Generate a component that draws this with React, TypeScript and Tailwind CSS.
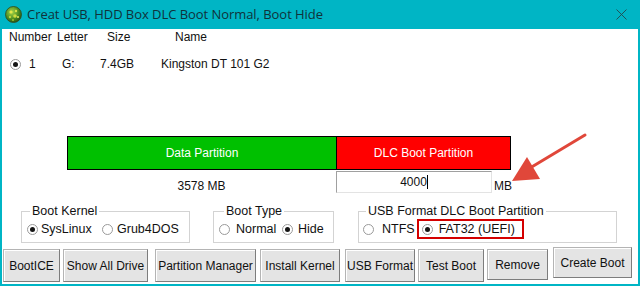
import React from "react";

function Radio({ checked }: { checked?: boolean }) {
  return (
    <span className="inline-flex w-[11px] h-[11px] shrink-0 items-center justify-center rounded-full border border-[#9a9a9a] bg-white">
      {checked && <span className="w-[5px] h-[5px] rounded-full bg-[#151515]" />}
    </span>
  );
}

function Btn({ label, w, cls = "" }: { label: string; w: string; cls?: string }) {
  return (
    <button
      className={`${w} ${cls} flex items-center justify-center bg-[#e4e4e4] border border-[#b4b4b4] border-r-[#7d7d7d] border-b-[#7d7d7d] shadow-[inset_1px_1px_0_#ffffff] text-[12px] text-[#111] leading-none whitespace-nowrap`}
    >
      {label}
    </button>
  );
}

export default function App() {
  return (
    <div className="relative w-[640px] h-[287px] bg-white overflow-hidden font-['Liberation_Sans',Arial,sans-serif] text-[#111]">
      <div className="flex flex-col w-[640px] h-[286px]">
        {/* Title bar */}
        <div className="flex items-center h-[29px] bg-[#00b5c5] pl-[5px] pr-[13px] shrink-0">
          <svg width="17" height="17" viewBox="0 0 17 17" className="shrink-0">
            <defs>
              <radialGradient id="g" cx="0.4" cy="0.35" r="0.7">
                <stop offset="0" stopColor="#a6d64a" />
                <stop offset="0.6" stopColor="#4c8d22" />
                <stop offset="1" stopColor="#244d12" />
              </radialGradient>
            </defs>
            <circle cx="8.5" cy="8.5" r="8" fill="url(#g)" stroke="#2f4a1e" strokeWidth="0.8" />
            <circle cx="6" cy="6" r="1.6" fill="#e3e64a" />
            <circle cx="11" cy="5" r="1.2" fill="#d8e048" />
            <circle cx="10" cy="10" r="1.8" fill="#cddc3e" />
            <circle cx="5" cy="11" r="1.2" fill="#b9d23a" />
            <circle cx="13" cy="11" r="1" fill="#e8ea58" />
            <circle cx="8" cy="14" r="1" fill="#9cc032" />
          </svg>
          <span className="ml-[5px] text-[13px] text-[#10323a] font-['Open_Sans',sans-serif] tracking-[-0.05px] leading-none">
            Creat USB, HDD Box DLC Boot Normal, Boot Hide
          </span>
          <svg width="11" height="11" viewBox="0 0 11 11" className="ml-auto">
            <path d="M0.5 0.5 L10.5 10.5 M10.5 0.5 L0.5 10.5" stroke="#24474c" strokeWidth="0.9" />
          </svg>
        </div>

        {/* Body */}
        <div className="flex flex-col flex-1 border-l-2 border-r-2 border-b-2 border-[#00b5c5] bg-white text-[12px]">
          {/* header */}
          <div className="flex items-center h-[16px] pl-[7px]">
            <span className="w-[48px]">Number</span>
            <span className="w-[50px]">Letter</span>
            <span className="w-[68px]">Size</span>
            <span>Name</span>
          </div>
          {/* device row */}
          <div className="flex items-center h-[16px] mt-[11px] pl-[8px]">
            <span className="w-[19px] flex">
              <Radio checked />
            </span>
            <span className="w-[33px]">1</span>
            <span className="w-[38px]">G:</span>
            <span className="w-[61px]">7.4GB</span>
            <span>Kingston DT 101 G2</span>
          </div>

          {/* partition bar */}
          <div className="flex mt-[64px] ml-[65px] w-[444px] h-[34px] border border-black text-white">
            <div className="w-[268px] bg-[#00c000] flex items-center justify-center">Data Partition</div>
            <div className="flex-1 border-l border-black bg-[#ff0000] flex items-center justify-center">
              DLC Boot Partition
            </div>
          </div>

          {/* sizes row */}
          <div className="flex items-start ml-[65px] mt-[1px] h-[23px]">
            <div className="w-[269px] text-center pt-[7px] leading-[16px]">3578 MB</div>
            <div className="w-[156px] h-[22px] bg-white border border-[#a0a0a0] border-r-[#e3e3e3] border-b-[#e3e3e3] flex items-center justify-center">
              <span className="leading-none">4000</span>
              <span className="w-[1px] h-[14px] bg-black" />
            </div>
            <div className="ml-[2px] pt-[7px] leading-[16px]">MB</div>
          </div>

          {/* group boxes */}
          <div className="flex mt-[10px] text-[12.5px]">
            <fieldset className="ml-[19px] w-[169px] border border-[#d3d3d3] pb-[5px]">
              <legend className="ml-[8px] px-[2px] leading-[14px]">Boot Kernel</legend>
              <div className="flex items-center h-[16px] mt-[3px] pl-[5px]">
                <Radio checked />
                <span className="ml-[3px] w-[61px]">SysLinux</span>
                <Radio />
                <span className="ml-[4px]">Grub4DOS</span>
              </div>
            </fieldset>
            <fieldset className="ml-[23px] w-[121px] border border-[#d3d3d3] pb-[5px]">
              <legend className="ml-[10px] px-[2px] leading-[14px]">Boot Type</legend>
              <div className="flex items-center h-[16px] mt-[3px] pl-[5px]">
                <Radio />
                <span className="ml-[6px] w-[46px]">Normal</span>
                <Radio checked />
                <span className="ml-[5px]">Hide</span>
              </div>
            </fieldset>
            <fieldset className="ml-[24px] w-[259px] border border-[#d3d3d3] pb-[5px]">
              <legend className="ml-[7px] px-[2px] leading-[14px]">USB Format DLC Boot Partition</legend>
              <div className="flex items-center h-[16px] mt-[3px] pl-[4px]">
                <Radio />
                <span className="ml-[8px]">NTFS</span>
                <div className="ml-[2px] flex items-center h-[20px] border-2 border-[#d40000] pl-[3px] pr-[7px]">
                  <Radio checked />
                  <span className="ml-[6px]">FAT32 (UEFI)</span>
                </div>
              </div>
            </fieldset>
          </div>

          {/* buttons */}
          <div className="flex items-start mt-[6px] pl-[1px]">
            <Btn label="BootICE" w="w-[57px] h-[33px]" />
            <Btn label="Show All Drive" w="w-[85px] h-[33px]" cls="ml-[3px]" />
            <Btn label="Partition Manager" w="w-[101px] h-[33px]" cls="ml-[7px]" />
            <Btn label="Install Kernel" w="w-[80px] h-[33px]" cls="ml-[4px]" />
            <Btn label="USB Format" w="w-[70px] h-[33px]" cls="ml-[5px]" />
            <Btn label="Test Boot" w="w-[66px] h-[33px]" cls="ml-[3px]" />
            <Btn label="Remove" w="w-[61px] h-[31px]" cls="ml-[3px]" />
            <Btn label="Create Boot" w="w-[79px] h-[31px]" cls="ml-[5px] -mt-[2px]" />
          </div>
        </div>
      </div>

      {/* annotation arrow */}
      <svg className="absolute left-0 top-0 pointer-events-none" width="640" height="287">
        <line x1="585" y1="135" x2="530" y2="168" stroke="#e0473a" strokeWidth="3" strokeLinecap="round" />
        <polygon points="512,181 527,157 540,179" fill="#e0473a" />
      </svg>
    </div>
  );
}
